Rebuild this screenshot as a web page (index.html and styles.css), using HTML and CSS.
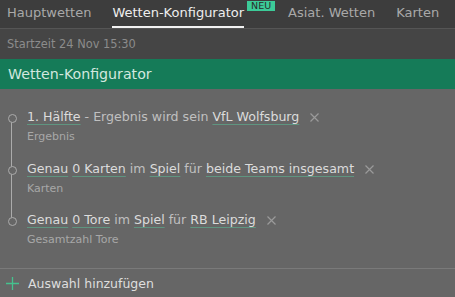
FILE: index.html
```html
<!DOCTYPE html>
<html lang="de">
<head>
<meta charset="utf-8">
<link rel="stylesheet" href="styles.css">
</head>
<body>
<div class="app">
  <nav class="tabs">
    <span class="tab">Hauptwetten</span>
    <span class="tab active">Wetten-Konfigurator<span class="badge">NEU</span></span>
    <span class="tab">Asiat. Wetten</span>
    <span class="tab">Karten</span>
  </nav>
  <div class="start">Startzeit 24 Nov 15:30</div>
  <div class="title">Wetten-Konfigurator</div>
  <div class="body">
    <ul class="steps">
      <li class="step">
        <div class="main"><a class="lnk">1. Hälfte</a> - Ergebnis wird sein <a class="lnk">VfL Wolfsburg</a><span class="x"><svg width="9" height="9" viewBox="0 0 9 9"><path d="M0.5 0.5L8.5 8.5M8.5 0.5L0.5 8.5" stroke="#9a9a9a" stroke-width="1.2" fill="none"/></svg></span></div>
        <div class="sub">Ergebnis</div>
      </li>
      <li class="step">
        <div class="main"><a class="lnk">Genau</a> <a class="lnk">0 Karten</a> im <a class="lnk">Spiel</a> für <a class="lnk">beide Teams insgesamt</a><span class="x"><svg width="9" height="9" viewBox="0 0 9 9"><path d="M0.5 0.5L8.5 8.5M8.5 0.5L0.5 8.5" stroke="#9a9a9a" stroke-width="1.2" fill="none"/></svg></span></div>
        <div class="sub">Karten</div>
      </li>
      <li class="step last">
        <div class="main"><a class="lnk">Genau</a> <a class="lnk">0 Tore</a> im <a class="lnk">Spiel</a> für <a class="lnk">RB Leipzig</a><span class="x"><svg width="9" height="9" viewBox="0 0 9 9"><path d="M0.5 0.5L8.5 8.5M8.5 0.5L0.5 8.5" stroke="#9a9a9a" stroke-width="1.2" fill="none"/></svg></span></div>
        <div class="sub">Gesamtzahl Tore</div>
      </li>
    </ul>
    <div class="add">
      <svg class="plus" width="13" height="13" viewBox="0 0 13 13"><path d="M6.5 0V13M0 6.5H13" stroke="#45c28e" stroke-width="1.3" fill="none"/></svg>
      <span>Auswahl hinzufügen</span>
    </div>
  </div>
</div>
</body>
</html>
```
FILE: styles.css
```css
* { box-sizing: border-box; }
html, body { margin: 0; padding: 0; }
body {
  width: 455px;
  height: 297px;
  overflow: hidden;
  font-family: "DejaVu Sans", Verdana, sans-serif;
  background: #666666;
}
.app { display: flex; flex-direction: column; height: 297px; }
.tabs {
  display: flex;
  gap: 21px;
  height: 29px;
  padding-left: 7px;
  background: #3d3d3d;
  border-bottom: 1px solid #555555;
  white-space: nowrap;
}
.tab {
  position: relative;
  font-size: 13px;
  line-height: 26px;
  height: 28px;
  color: #a9a9a9;
  border-bottom: 2px solid transparent;
}
.tab.active {
  color: #eeeeee;
  border-bottom-color: #f2f2f2;
  margin-right: 23px;
}
.badge {
  position: absolute;
  left: calc(100% + 3px);
  top: 1px;
  height: 10px;
  padding: 0 4px;
  background: #3ccb98;
  color: #2b2b2b;
  font-size: 9.5px;
  line-height: 10px;
}
.start {
  height: 30px;
  background: #454545;
  color: #8c8c8c;
  font-size: 11.4px;
  line-height: 30px;
  padding-left: 7px;
}
.title {
  height: 30px;
  background: #157b58;
  color: #d2e8df;
  font-size: 14.2px;
  line-height: 30px;
  padding-left: 8px;
}
.body { flex: 1; display: flex; flex-direction: column; background: #666666; }
.steps {
  list-style: none;
  margin: 0;
  padding: 19px 0 0 27px;
  flex: 1;
}
.step { position: relative; height: 51.5px; }
.step::before {
  content: "";
  position: absolute;
  left: -19px;
  top: 6px;
  width: 7px;
  height: 7px;
  border: 1px solid #ababab;
  border-radius: 50%;
  background: #666666;
  z-index: 1;
}
.step::after {
  content: "";
  position: absolute;
  left: -16px;
  top: 10px;
  width: 1px;
  height: 52px;
  background: #ababab;
}
.step.last::after { display: none; }
.main {
  display: block;
  font-size: 12.6px;
  line-height: 18px;
  color: #c0c0c0;
  white-space: nowrap;
}
.lnk {
  color: #dcdcdc;
  text-decoration: underline;
  text-decoration-color: #5f9580;
  text-underline-offset: 3px;
  text-decoration-thickness: 1px;
}
.x { display: inline-block; margin-left: 11px; vertical-align: -1px; }
.x svg { display: block; }
.sub {
  font-size: 11px;
  line-height: 16px;
  color: #a8a8a8;
  margin-top: 3px;
}
.add {
  height: 29px;
  border-top: 1px solid #7a7a7a;
  display: flex;
  align-items: center;
  padding-left: 6px;
  gap: 9px;
  color: #dedede;
  font-size: 12.5px;
}
.plus { display: block; }
```
